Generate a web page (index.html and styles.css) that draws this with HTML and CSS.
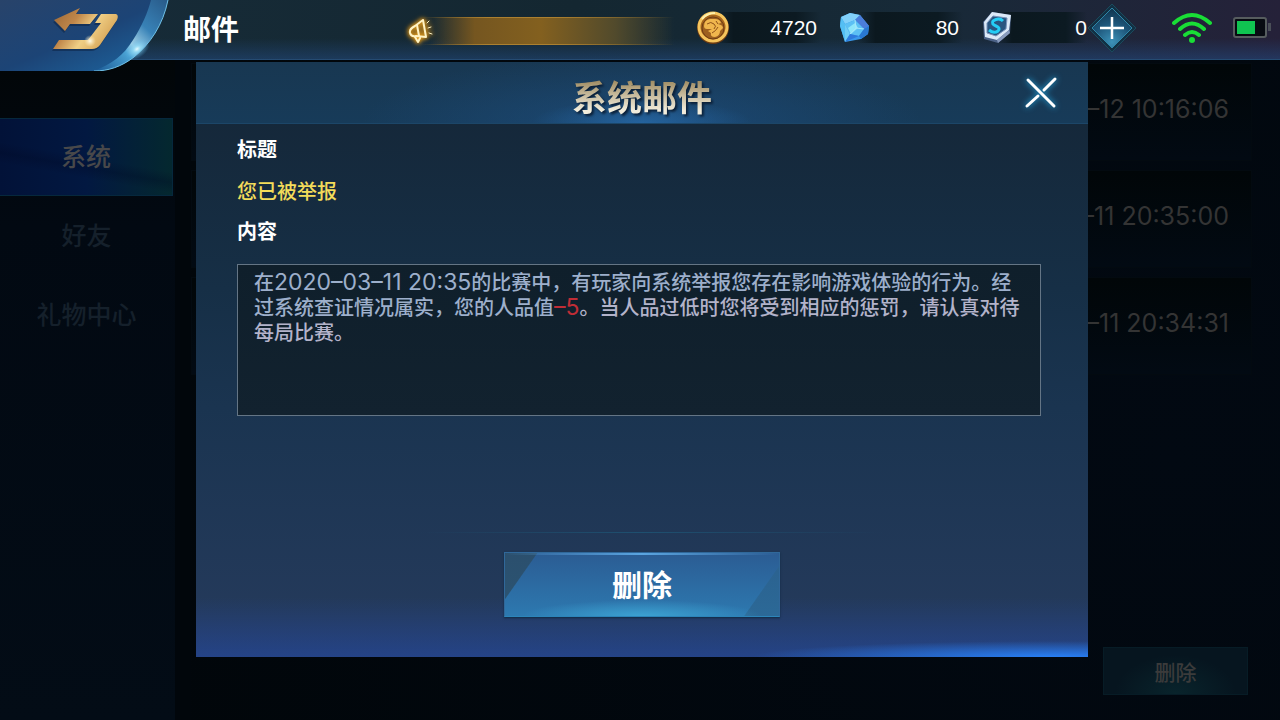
FILE: index.html
```html
<!DOCTYPE html>
<html lang="zh-CN">
<head>
<meta charset="utf-8">
<meta name="viewport" content="width=device-width, initial-scale=1">
<title>邮件</title>
<link rel="stylesheet" href="styles.css">
</head>
<body>
<header class="topbar">
  <button class="back" type="button" aria-label="返回">
    <svg width="176" height="71" viewBox="0 0 176 71" aria-hidden="true">
      <defs>
        <linearGradient id="plate" x1="0" y1="0" x2="1" y2="1">
          <stop offset="0" stop-color="#28436a"/><stop offset=".5" stop-color="#1c4476"/><stop offset="1" stop-color="#1d69a5"/>
        </linearGradient>
        <linearGradient id="rim" x1="168" y1="0" x2="96" y2="71" gradientUnits="userSpaceOnUse">
          <stop offset="0" stop-color="#2b5f8d"/><stop offset=".35" stop-color="#3f8fc4"/><stop offset=".56" stop-color="#c9f4ff"/><stop offset=".66" stop-color="#55b4e4"/><stop offset="1" stop-color="#1b5a96"/>
        </linearGradient>
        <linearGradient id="gold" x1="54" y1="8" x2="110" y2="49" gradientUnits="userSpaceOnUse">
          <stop offset="0" stop-color="#9a6636"/><stop offset=".35" stop-color="#c0874a"/><stop offset=".6" stop-color="#f0cf85"/><stop offset=".8" stop-color="#e0b468"/><stop offset="1" stop-color="#c99548"/>
        </linearGradient>
        <radialGradient id="flare"><stop offset="0" stop-color="#e9fcff"/><stop offset=".3" stop-color="#8fdcf8" stop-opacity=".7"/><stop offset="1" stop-color="#4aa9e0" stop-opacity="0"/></radialGradient>
        <radialGradient id="glint"><stop offset="0" stop-color="#fffbe8"/><stop offset="1" stop-color="#ffe9b4" stop-opacity="0"/></radialGradient>
      </defs>
      <path d="M0 0H168C163 25 150 44 134 57C121 67 108 71 94 71H0Z" fill="url(#plate)"/>
      <path d="M168 0C163 25 150 44 134 57C121 67 108 71 94 71C112 64 124 55 133 40C142 26 148 12 151 0Z" fill="url(#rim)" opacity=".8"/>
      <path d="M168 0C163 25 150 44 134 57C121 67 108 71 94 71" fill="none" stroke="#6fc0e6" stroke-width="1"/>
      <ellipse cx="137" cy="49" rx="14" ry="9" fill="url(#flare)" transform="rotate(-35 137 49)"/>
      <path d="M54 20L80 8L76 14H98L90 24H70L65 31ZM101 14H116Q119 15 117 20L100 45Q97 49 92 49H53L59 40H88L101 23H95Z" fill="#0a2040" opacity=".5" transform="translate(-1 2)"/>
      <path d="M54 20L80 8L76 14H98L90 24H70L65 31ZM101 14H116Q119 15 117 20L100 45Q97 49 92 49H53L59 40H88L101 23H95Z" fill="url(#gold)"/>
      <circle cx="90" cy="41" r="6" fill="url(#glint)"/>
    </svg>
  </button>
  <h1 class="page-title">邮件</h1>
  <div class="status">
    <div class="notice">
      <svg width="30" height="30" viewBox="0 0 30 30" fill="none" stroke="#fff3c4" stroke-width="2" stroke-linecap="round" stroke-linejoin="round" aria-hidden="true">
        <path d="M15 4L7 10Q1 13 2 17Q3 21 8 20L18 21Z"/><path d="M9 9L11 20M7 21L10 26L12 22"/><path d="M19 7L21 5M20 12L23 11M21 17L24 18" stroke-width="1"/>
      </svg>
    </div>
    <div class="currency">
      <svg class="currency-icon" width="34" height="34" viewBox="0 0 34 34" aria-hidden="true">
        <circle cx="17" cy="17" r="16" fill="#6c3a11"/><circle cx="17" cy="16" r="14" fill="#a7661d" stroke="#f5c55d" stroke-width="3"/><circle cx="17" cy="17" r="11" fill="#9d601f" stroke="#6d3c14"/>
        <path d="M8 15Q8 9 14 8L19 8Q24 8 25 12L22 13Q27 14 27 17L24 20Q24 25 19 26Q14 26 15 22L12 20L16 18L11 18Q8 18 8 15Z" fill="#f0b64d"/><path d="M11 13Q15 10 18 13Q21 15 18 18M16 22Q20 20 22 16M20 10L22 13" stroke="#8e5118" stroke-width="1" fill="none"/>
        <path d="M6 8Q11 2 19 2" stroke="#fff0aa" stroke-width="2" fill="none"/>
      </svg>
      <span class="amount">4720</span>
    </div>
    <div class="currency">
      <svg class="currency-icon" width="34" height="34" viewBox="0 0 34 34" aria-hidden="true">
        <path d="M3 6L12 2L22 4L31 15L30 23L23 28L7 31L2 15Z" fill="#3999ec"/>
        <path d="M3 6L12 2L22 4L17 9L7 13Z" fill="#82d1fa"/><path d="M17 9L22 4L31 15L26 18Z" fill="#4b7dda"/><path d="M3 6L7 13L7 31L2 15Z" fill="#54bff3"/><path d="M7 13L17 9L26 18L21 25L12 23Z" fill="#5cc0f4"/><path d="M10 17L17 12L20 17L13 23Z" fill="#8ee6fa"/><path d="M7 13L12 23L7 31Z" fill="#6fcdf5"/><path d="M12 23L21 25L7 31Z" fill="#2e7bdd"/><path d="M17 9L18 17L12 23M18 17L26 18" fill="none" stroke="#a5e6fb"/><path d="M21 25L26 18L31 15L30 23L23 28Z" fill="#2978d2"/>
      </svg>
      <span class="amount">80</span>
    </div>
    <div class="currency currency-last">
      <svg class="currency-icon" width="34" height="34" viewBox="0 0 34 34" aria-hidden="true">
        <path d="M12 1L31 4L30 22L18 32L4 28L3 11Z" fill="#4b6186"/><path d="M12 1L31 4L29 19L17 29L5 26L4 11Z" fill="#dce9f8"/><path d="M13 5L27 7L26 18L16 25L7 22L7 12Z" fill="#295580" stroke="#7893ba"/><path d="M23 10Q19 6 13 10Q11 13 16 15Q21 17 18 20Q14 23 9 19" fill="none" stroke="#24cdf5" stroke-width="3"/><path d="M29 19L30 22L18 32L17 29Z" fill="#8a9cbe"/>
      </svg>
      <span class="amount">0</span>
    </div>
    <button class="add" type="button" aria-label="充值">
      <svg width="50" height="50" viewBox="0 0 50 50" aria-hidden="true">
        <defs><radialGradient id="gem" cy=".85" r=".8"><stop offset="0" stop-color="#3c92b8"/><stop offset=".6" stop-color="#1d5478"/><stop offset="1" stop-color="#123852"/></radialGradient></defs>
        <path d="M25 1L49 25L25 49L1 25Z" fill="#123043" stroke="#1a4a5c"/><path d="M25 5L45 25L25 45L5 25Z" fill="url(#gem)" stroke="#2e86a8"/><path d="M25 14V36M13 25H37" stroke="#fff" stroke-width="2.5"/>
      </svg>
    </button>
    <svg class="wifi" width="40" height="32" viewBox="0 0 40 32" fill="none" stroke="#19de36" stroke-width="4" stroke-linecap="round" role="img" aria-label="无线网络">
      <path d="M2 11Q20-5 38 11M8 17Q20 6 32 17M13 23Q20 17 27 23"/><circle cx="20" cy="28" r="3" fill="#19de36" stroke="none"/>
    </svg>
    <svg width="38" height="22" viewBox="0 0 38 22" role="img" aria-label="电量">
      <rect x="1" y="1" width="32" height="19" rx="2" fill="#080b12" stroke="#565c5e" stroke-width="2"/><rect x="4" y="4" width="18" height="13" fill="#10c451"/><rect x="35" y="6" width="3" height="8" fill="#4a4e58"/>
    </svg>
  </div>
</header>

<div class="stage">
  <nav class="tabs" aria-label="邮件分类">
    <button class="tab tab-active" type="button">系统</button>
    <button class="tab" type="button">好友</button>
    <button class="tab" type="button">礼物中心</button>
  </nav>
  <main class="inbox">
    <ul class="mails">
      <li class="mail"><time>2020–03–12 10:16:06</time></li>
      <li class="mail"><time>2020–03–11 20:35:00</time></li>
      <li class="mail"><time>2020–03–11 20:34:31</time></li>
    </ul>
    <button class="clear" type="button">删除</button>
  </main>

  <div class="overlay">
    <section class="dialog" role="dialog" aria-labelledby="dialog-title">
      <div class="dialog-head">
        <h2 class="dialog-title" id="dialog-title">系统邮件</h2>
        <button class="close" type="button" aria-label="关闭">
          <svg width="34" height="34" viewBox="0 0 34 34" fill="none" stroke="#fff" stroke-width="3" stroke-linecap="round" aria-hidden="true"><path d="M4 4L30 30M31 3L20 14M14 20L3 30"/></svg>
        </button>
      </div>
      <div class="dialog-body">
        <h3 class="label">标题</h3>
        <p class="subject">您已被举报</p>
        <h3 class="label">内容</h3>
        <p class="message">在<span class="num">2020–03–11 20:35</span>的比赛中，有玩家向系统举报您存在影响游戏体验的行为。经过系统查证情况属实，您的人品值<span class="num penalty">–5</span><span class="warning">。当人品过低时您将受到相应的惩罚，请认真对待每局比赛。</span></p>
      </div>
      <div class="dialog-foot">
        <button class="delete" type="button">删除</button>
      </div>
    </section>
  </div>
</div>
</body>
</html>
```
FILE: styles.css
```css
* { box-sizing: border-box; }
body {
  margin: 0;
  min-height: 100vh;
  display: flex;
  flex-direction: column;
  background: #01060b;
  color: #fff;
  font-family: "Noto Sans CJK SC", sans-serif;
}
button {
  border: 0;
  padding: 0;
  background: none;
  color: inherit;
  font-family: inherit;
  cursor: pointer;
}
h1, h2, h3, p, ul { margin: 0; padding: 0; }
svg { display: block; flex: none; }

.topbar {
  position: relative;
  z-index: 1;
  height: 60px;
  padding-bottom: 4px;
  display: flex;
  align-items: center;
  background:
    linear-gradient(to bottom, transparent 65%, rgba(35, 75, 130, .5)),
    linear-gradient(to right, #172c39 0, #142731 45%, #172a38 72%, #252139);
  border-bottom: 1px solid #254b72;
}
.back { align-self: flex-start; height: 71px; }
.page-title {
  margin-left: 7px;
  font-size: 28px;
  line-height: 40px;
  font-weight: 700;
}
.status {
  margin-left: auto;
  padding-right: 9px;
  display: flex;
  align-items: center;
}
.notice {
  width: 266px;
  height: 28px;
  margin: 6px 22px 0 0;
  display: flex;
  align-items: center;
  background: linear-gradient(to right, transparent 8%, #755620 25%, #83601f 50%, #514a2c 78%, transparent);
  border-style: solid;
  border-width: 1px 0;
  border-image: linear-gradient(to right, transparent 5%, #ab8030 30%, #ab8030 55%, transparent) 1;
}
.notice svg { filter: drop-shadow(0 0 2px #f0a51c) drop-shadow(0 0 2px #d98d12); }
.currency {
  width: 125px;
  height: 31px;
  margin-right: 17px;
  display: flex;
  align-items: center;
  justify-content: space-between;
  background: linear-gradient(to right, transparent 15%, #0b181f 30%, #0c1a22 80%, transparent);
}
.amount {
  padding-right: 4px;
  font: 21px/30px "Liberation Sans", sans-serif;
}
.currency-last { width: 107px; margin-right: 0; }
.currency-last .amount { padding-right: 0; }
.add { margin-right: 35px; }
.add, .wifi { flex: none; }
.wifi { margin-right: 21px; }

.stage {
  position: relative;
  flex: 1;
  display: flex;
  gap: 16px;
}
.tabs {
  width: 175px;
  padding: 58px 2px 0 0;
  display: flex;
  flex-direction: column;
  gap: 1px;
  background: linear-gradient(to bottom, #020608, #020912 25%, #030c16);
}
.tab {
  height: 78px;
  padding-bottom: 4px;
  font-size: 25px;
  font-weight: 500;
  color: #15202b;
}
.tab-active {
  color: #48484a;
  background: linear-gradient(10deg, transparent 30%, rgba(0, 8, 35, .3) 40%, transparent 50%), linear-gradient(to right, #021238, #021841 50%, #04282f);
  border: 1px solid #06283d;
  border-left: 0;
}
.inbox {
  flex: 1;
  padding: 3px 28px 25px 0;
  display: flex;
  flex-direction: column;
  background: radial-gradient(circle at 90% 60%, #020912, #01060a);
}
.mails {
  list-style: none;
  display: flex;
  flex-direction: column;
  gap: 9px;
}
.mail {
  height: 98px;
  padding: 0 22px 6px 0;
  display: flex;
  align-items: center;
  justify-content: flex-end;
  background: linear-gradient(to bottom, #010608, #020a13);
  border: 1px solid #030a10;
  color: #343434;
  font: 25px/32px Inter, sans-serif;
}
.clear {
  width: 145px;
  height: 48px;
  margin: auto 4px 0 auto;
  background: radial-gradient(ellipse at 50% 100%, #09242c, transparent 60%), #06151f;
  border: 1px solid #071c26;
  color: #3b3b3b;
  font-size: 21px;
  font-weight: 500;
}

.overlay {
  position: absolute;
  inset: 2px 0 0 4px;
  display: flex;
  align-items: flex-start;
  justify-content: center;
}
.dialog {
  width: 70%;
  max-width: 892px;
  min-height: 595px;
  display: flex;
  flex-direction: column;
  background:
    radial-gradient(ellipse 300px 16px at 96% 100%, #287ff5, transparent),
    linear-gradient(to bottom, transparent 90%, rgba(36, 73, 163, .6)),
    linear-gradient(to bottom, #15283a 10%, #162f46 38%, #1a3450 58%, #263b5d);
}
.dialog-head {
  height: 62px;
  padding: 0 30px;
  display: grid;
  grid-template-columns: 34px 1fr 34px;
  align-items: center;
  background:
    radial-gradient(ellipse 110px 24px at 50% 100%, rgba(40, 110, 175, .7), transparent),
    radial-gradient(ellipse 280px 70px at 50% 100%, rgba(31, 82, 135, .6), transparent),
    linear-gradient(to bottom, #183751, #173b59);
  border-bottom: 1px solid #1c4668;
}
.dialog-title {
  grid-column: 2;
  justify-self: center;
  padding-top: 6px;
  background: linear-gradient(to bottom, #a18e65 30%, #f2eddc 80%);
  background-clip: text;
  -webkit-background-clip: text;
  color: transparent;
  font-size: 35px;
  line-height: 52px;
  font-weight: 700;
  filter: drop-shadow(2px 2px 1px #0b2038);
}
.close { filter: drop-shadow(0 0 3px #21b3f0); }
.dialog-body {
  padding: 10px 47px 0 41px;
}
.label {
  font-size: 20px;
  line-height: 30px;
  font-weight: 700;
}
.subject {
  padding: 12px 0 10px;
  color: #f3dc5a;
  font-size: 20px;
  line-height: 30px;
  font-weight: 500;
}
.message {
  min-height: 152px;
  margin-top: 18px;
  padding: 4px 16px;
  background: linear-gradient(to bottom, #0f1f2b, #12222f);
  border: 1px solid #647585;
  color: #9dafcb;
  font-size: 20px;
  line-height: 25px;
  font-weight: 500;
}
.num { font: 23px/20px Inter, sans-serif; }
.penalty { color: #c02d36; }
.warning { color: #b3b3ca; }
.dialog-foot {
  margin: auto 0 0;
  padding: 20px 0 40px;
  display: flex;
  justify-content: center;
  background: linear-gradient(to right, transparent 25%, #1e5070 50%, transparent 77%) top / 100% 1px no-repeat;
}
.delete {
  width: 276px;
  height: 65px;
  padding-bottom: 4px;
  background:
    linear-gradient(to right, transparent, #5ba5e0 50%, transparent) top / 100% 2px no-repeat,
    radial-gradient(ellipse 120px 16px at 50% 100%, #3ca2d2, transparent),
    linear-gradient(125deg, rgba(43, 76, 100, .8) 26px, transparent 27px),
    linear-gradient(305deg, rgba(43, 98, 140, .7) 28px, transparent 29px),
    linear-gradient(to bottom, #2b5c93, #2d79b0);
  border: 1px solid #30689a;
  border-bottom-color: #2c85ba;
  box-shadow: 0 1px 2px #102a44;
  font-size: 30px;
  font-weight: 700;
}
```
